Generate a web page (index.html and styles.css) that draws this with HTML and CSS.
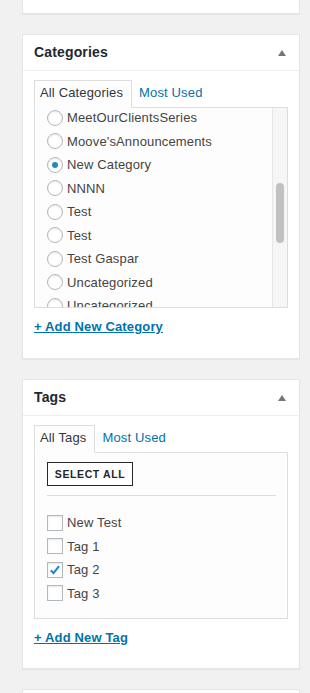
FILE: index.html
```html
<!DOCTYPE html>
<html lang="en">
<head>
  <meta charset="UTF-8" />
  <meta name="viewport" content="width=device-width, initial-scale=1.0"/>
  <title>Post sidebar</title>
  <link rel="stylesheet" href="styles.css">
</head>
<body>
  <div class="sidebar">
    <div class="postbox stub-top"></div>

    <!-- Categorias -->
    <div class="postbox">
      <div class="hndle">
        <h2>Categories</h2>
        <span class="toggle"></span>
      </div>
      <div class="inside cat-inside">
        <ul class="tabs">
          <li class="tab active">All Categories</li>
          <li class="tab"><a href="#">Most Used</a></li>
        </ul>
        <div class="tabs-panel cat-panel">
          <ul class="checklist">
            <li><span class="radio"></span>MeetOurClientsSeries</li>
            <li><span class="radio"></span>Moove'sAnnouncements</li>
            <li><span class="radio checked"></span>New Category</li>
            <li><span class="radio"></span>NNNN</li>
            <li><span class="radio"></span>Test</li>
            <li><span class="radio"></span>Test</li>
            <li><span class="radio"></span>Test Gaspar</li>
            <li><span class="radio"></span>Uncategorized</li>
            <li><span class="radio"></span>Uncategorized</li>
          </ul>
          <div class="scrollbar"><div class="thumb"></div></div>
        </div>
        <a class="add-new" href="#">+ Add New Category</a>
      </div>
    </div>

    <!-- Etiquetas -->
    <div class="postbox">
      <div class="hndle">
        <h2>Tags</h2>
        <span class="toggle"></span>
      </div>
      <div class="inside">
        <ul class="tabs">
          <li class="tab active">All Tags</li>
          <li class="tab"><a href="#">Most Used</a></li>
        </ul>
        <div class="tabs-panel tag-panel">
          <button class="select-all" type="button">Select All</button>
          <hr class="sep">
          <ul class="checklist">
            <li><span class="checkbox"></span>New Test</li>
            <li><span class="checkbox"></span>Tag 1</li>
            <li>
              <span class="checkbox">
                <svg viewBox="0 0 16 16" width="16" height="16"><path d="M3.2 8.4 L6.3 11.6 L12.6 3.6" fill="none" stroke="#1e8cbe" stroke-width="2.4"/></svg>
              </span>Tag 2
            </li>
            <li><span class="checkbox"></span>Tag 3</li>
          </ul>
        </div>
        <a class="add-new" href="#">+ Add New Tag</a>
      </div>
    </div>

    <div class="postbox stub-bottom"></div>
  </div>
</body>
</html>
```

FILE: styles.css
```css
* {
  box-sizing: border-box;
}

body {
  margin: 0;
  padding: 0;
  background: #f1f1f1;
  font-family: 'Liberation Sans', Arial, sans-serif;
  font-size: 13px;
  letter-spacing: 0.15px;
  color: #444;
  overflow: hidden;
}

.sidebar {
  padding: 0 10px 0 22px;
}

.postbox {
  background: #fff;
  border: 1px solid #e5e5e5;
  box-shadow: 0 1px 1px rgba(0, 0, 0, 0.04);
  margin-bottom: 20px;
}

.stub-top {
  height: 14px;
  border-top: none;
}

.stub-bottom {
  height: 40px;
}

.hndle {
  display: flex;
  align-items: center;
  justify-content: space-between;
  padding: 8px 13px 8px 11px;
  border-bottom: 1px solid #eee;
  height: 36px;
}

.hndle h2 {
  margin: 0;
  font-size: 14px;
  font-weight: 600;
  line-height: 19px;
  color: #23282d;
}

.toggle {
  width: 0;
  height: 0;
  border-left: 4px solid transparent;
  border-right: 4px solid transparent;
  border-bottom: 6px solid #72777c;
}

.inside {
  padding: 9px 11px 21px;
}

.cat-inside {
  padding-bottom: 22px;
}

.tabs {
  display: flex;
  margin: 0;
  padding: 0;
  list-style: none;
}

.tab {
  padding: 3px 8px 5px 6px;
  line-height: 18px;
  border: 1px solid transparent;
  margin-bottom: -1px;
  position: relative;
  z-index: 1;
}

.tab.active {
  padding-left: 5px;
  background: #fdfdfd;
  border-color: #ddd;
  border-bottom-color: #fdfdfd;
  color: #32373c;
}

.tab a {
  color: #0073aa;
  text-decoration: none;
}

.tabs-panel {
  border: 1px solid #ddd;
  background: #fdfdfd;
}

.cat-panel {
  display: flex;
  height: 201px;
  overflow: hidden;
}

.cat-panel .checklist {
  flex: 1;
  margin-top: -2px;
}

.checklist {
  margin: 0;
  padding: 0 0 0 12px;
  list-style: none;
}

.checklist li {
  display: flex;
  align-items: center;
  height: 23.5px;
  white-space: nowrap;
}

.radio,
.checkbox {
  flex: none;
  width: 16px;
  height: 16px;
  margin-right: 4px;
  border: 1px solid #b4b9be;
  background: #fff;
  box-shadow: inset 0 1px 2px rgba(0, 0, 0, 0.1);
  display: flex;
  align-items: center;
  justify-content: center;
}

.radio {
  border-radius: 50%;
}

.radio.checked::before {
  content: "";
  width: 6px;
  height: 6px;
  border-radius: 50%;
  background: #1e8cbe;
}

.checkbox svg {
  display: block;
}

.scrollbar {
  flex: none;
  width: 15px;
  border-left: 1px solid #e6e6e6;
  background: #f6f6f6;
  padding-left: 3px;
}

.thumb {
  width: 8px;
  height: 60px;
  margin-top: 75px;
  border-radius: 4px;
  background: #c1c1c1;
}

.tag-panel {
  padding: 9px 0 13px;
}

.tag-panel .checklist {
  margin-top: 15px;
}

.select-all {
  display: block;
  margin-left: 12px;
  height: 24px;
  width: 86px;
  padding: 0;
  border: 1px solid #23282d;
  background: #fff;
  color: #23282d;
  font-family: inherit;
  font-size: 10.5px;
  font-weight: bold;
  letter-spacing: 0.6px;
  text-transform: uppercase;
}

.sep {
  margin: 9px 12px 0 12px;
  width: 229px;
  border: none;
  border-top: 1px solid #ddd;
  height: 0;
}

.add-new {
  display: inline-block;
  margin-top: 10px;
  line-height: 18px;
  color: #0073aa;
  font-weight: 600;
  font-size: 13px;
  text-decoration: underline;
}
```
